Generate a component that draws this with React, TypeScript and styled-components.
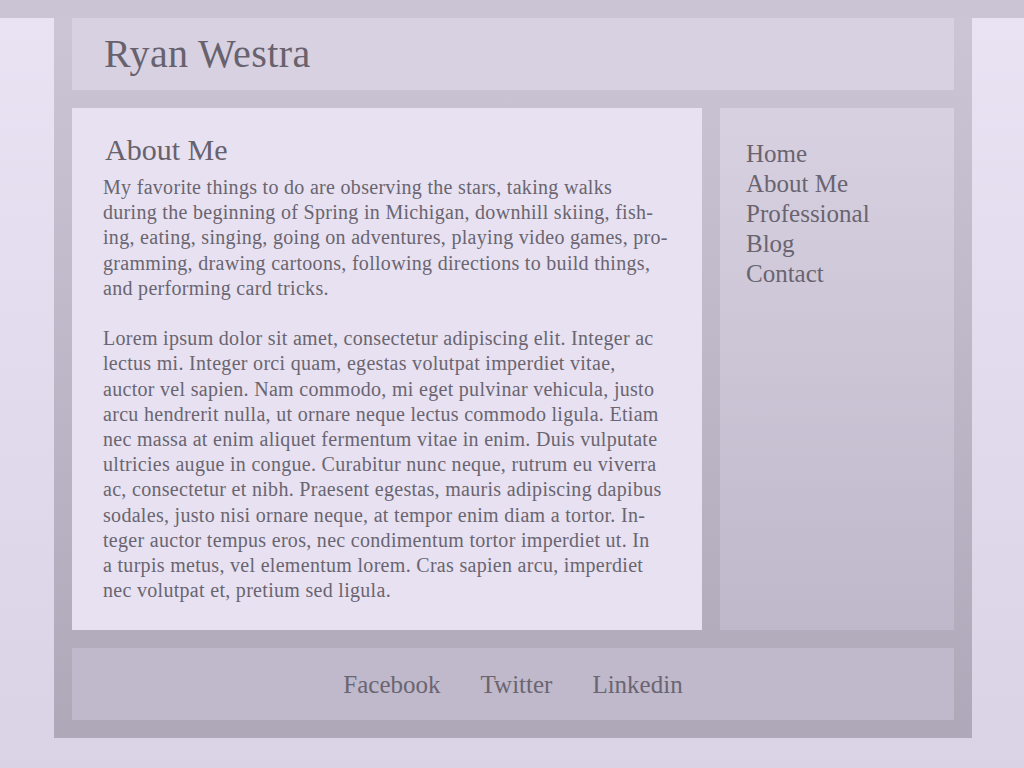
import React from "react";
import styled, { createGlobalStyle } from "styled-components";

const GlobalStyle = createGlobalStyle`
  html, body {
    margin: 0;
    padding: 0;
  }
  body {
    min-height: 768px;
    background: linear-gradient(to bottom, #e9e3f4 0%, #dad3e5 100%);
    font-family: "Liberation Serif", "Times New Roman", serif;
    color: #69646f;
  }
`;

const Page = styled.div`
  min-height: 768px;
  display: flex;
  flex-direction: column;
`;

const TopBand = styled.div`
  height: 18px;
  background: #cac4d4;
`;

const Wrapper = styled.div`
  width: 918px;
  margin: 0 0 0 54px;
  box-sizing: border-box;
  padding: 0 18px 18px;
  background: linear-gradient(to bottom, #cbc5d5 0%, #afa8b8 100%);
  display: flex;
  flex-direction: column;
  gap: 18px;
`;

const Header = styled.header`
  background: #d8d1e1;
  padding: 12px 32px;
`;

const SiteTitle = styled.h1`
  margin: 0;
  font-size: 40px;
  line-height: 48px;
  letter-spacing: 0.4px;
  font-weight: normal;
  color: #67626d;
`;

const Columns = styled.div`
  display: flex;
  gap: 18px;
  align-items: stretch;
`;

const Main = styled.main`
  width: 630px;
  box-sizing: border-box;
  background: #e7e1f1;
  padding: 24px 31px 27px;
`;

const SectionTitle = styled.h2`
  margin: 0 0 7px 2px;
  font-size: 30px;
  line-height: 36px;
  font-weight: normal;
  color: #67626d;
`;

const Paragraph = styled.p`
  margin: 0 0 25.2px;
  font-size: 20px;
  line-height: 25.2px;
  letter-spacing: 0.3px;
  color: #6a6570;
  &:last-child {
    margin-bottom: 0;
  }
`;

const Sidebar = styled.aside`
  flex: 1;
  background: linear-gradient(to bottom, #d8d1e1 0%, #bfb8ca 100%);
  padding: 31px 26px;
`;

const NavList = styled.ul`
  list-style: none;
  margin: 0;
  padding: 0;
`;

const NavItem = styled.li`
  font-size: 25px;
  line-height: 30px;
  color: #69646f;
`;

const Footer = styled.footer`
  background: #c0b8cb;
  height: 72px;
  box-sizing: border-box;
  padding-top: 2px;
  display: flex;
  justify-content: center;
  align-items: center;
  gap: 40px;
`;

const FooterLink = styled.span`
  font-size: 25px;
  line-height: 30px;
  color: #6a6570;
`;

const SH = "\u00AD";
const NB = "\u00A0";

export default function App() {
  return (
    <>
      <GlobalStyle />
      <Page>
        <TopBand />
        <Wrapper>
          <Header>
            <SiteTitle>Ryan Westra</SiteTitle>
          </Header>
          <Columns>
            <Main>
              <SectionTitle>About Me</SectionTitle>
              <Paragraph lang="en">
                My favorite things to do are observing the stars, taking walks
                during the beginning of Spring in Michigan, downhill skiing,
                {` fish${SH}ing`}, eating, singing, going on adventures, playing
                video games, {`pro${SH}gramming`}, drawing cartoons, following
                directions to build things, and performing card tricks.
              </Paragraph>
              <Paragraph lang="en">
                Lorem ipsum dolor sit amet, consectetur adipiscing elit. Integer
                ac lectus mi. Integer orci quam, egestas volutpat imperdiet
                vitae, auctor vel sapien. Nam commodo, mi eget pulvinar vehicula,
                justo arcu hendrerit nulla, ut ornare neque lectus commodo
                ligula. Etiam nec massa at enim aliquet fermentum vitae in enim.
                Duis vulputate ultricies augue in congue. Curabitur nunc neque,
                rutrum eu viverra ac, consectetur et nibh. Praesent egestas,
                mauris adipiscing dapibus sodales, justo nisi ornare neque, at
                tempor enim diam a tortor. {`In${SH}teger`} auctor tempus eros,
                nec condimentum tortor imperdiet ut. {`In a${NB}turpis`} metus,
                vel elementum lorem. Cras sapien arcu, imperdiet nec volutpat
                et, pretium sed ligula.
              </Paragraph>
            </Main>
            <Sidebar>
              <NavList>
                <NavItem>Home</NavItem>
                <NavItem>About Me</NavItem>
                <NavItem>Professional</NavItem>
                <NavItem>Blog</NavItem>
                <NavItem>Contact</NavItem>
              </NavList>
            </Sidebar>
          </Columns>
          <Footer>
            <FooterLink>Facebook</FooterLink>
            <FooterLink>Twitter</FooterLink>
            <FooterLink>Linkedin</FooterLink>
          </Footer>
        </Wrapper>
      </Page>
    </>
  );
}
